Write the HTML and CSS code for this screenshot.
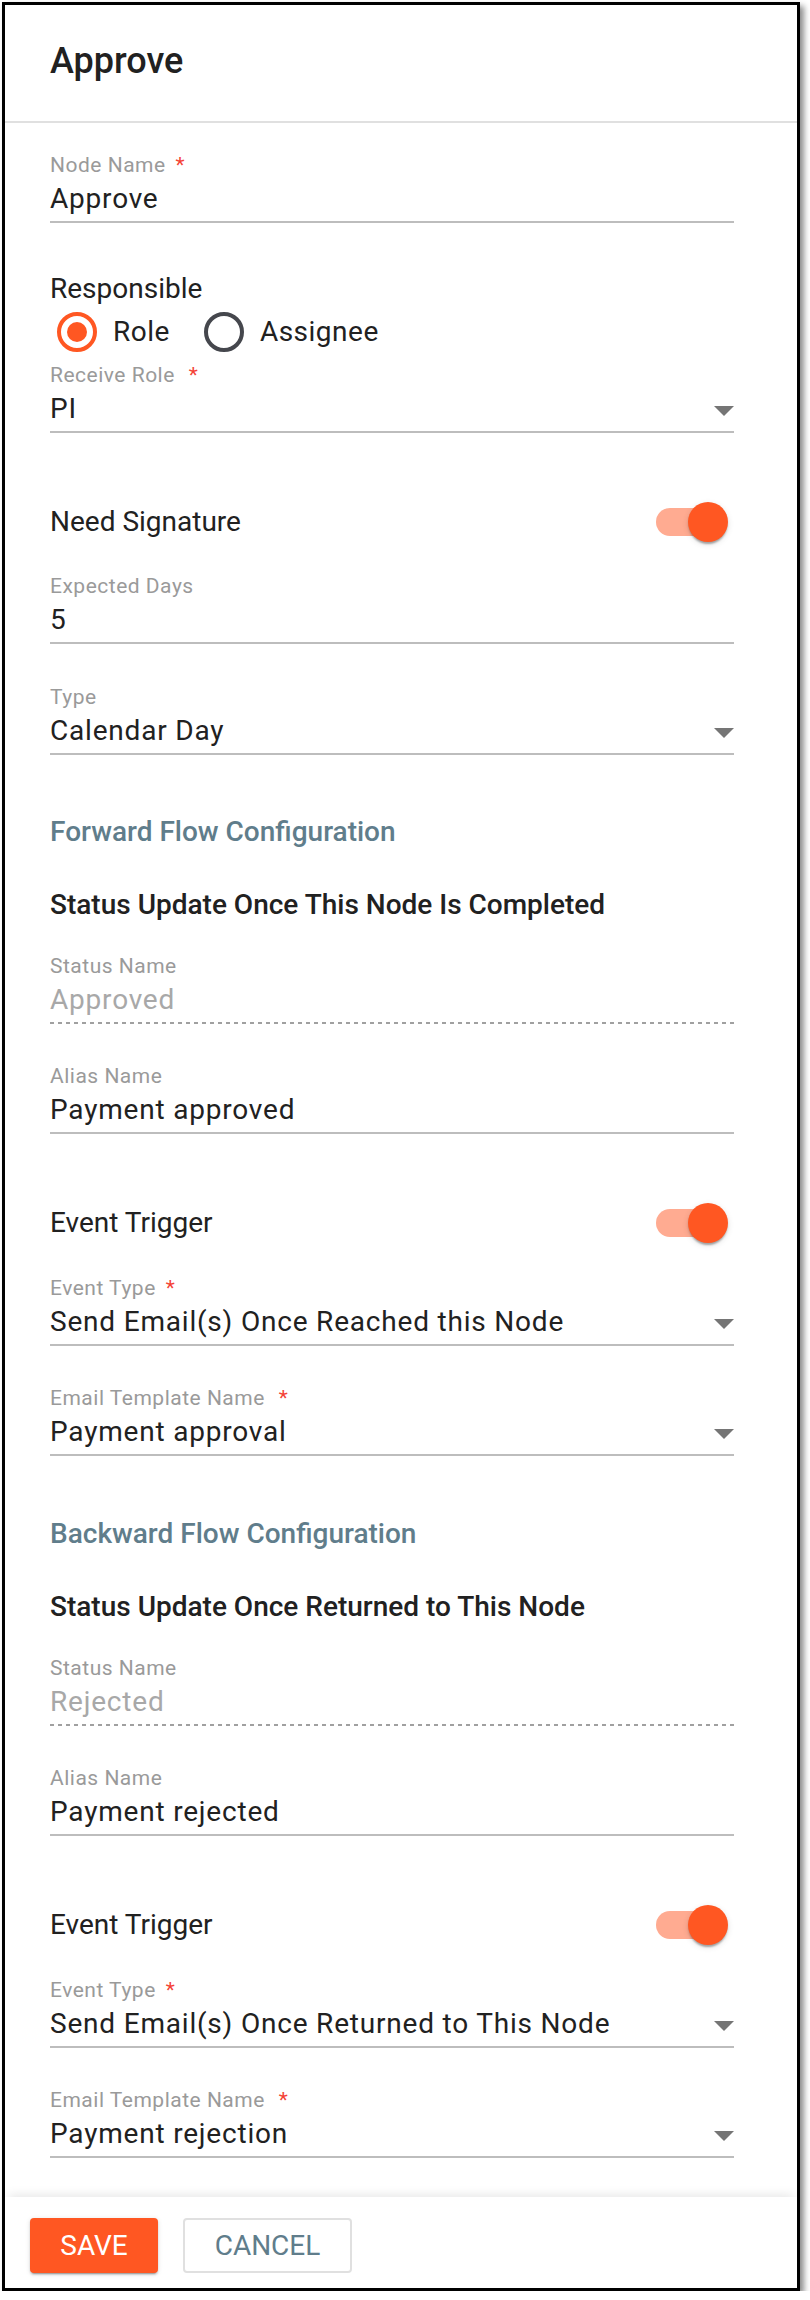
FILE: index.html
```html
<!DOCTYPE html>
<html lang="en">
<head>
<meta charset="utf-8">
<title>Approve</title>
<link rel="stylesheet" href="styles.css">
</head>
<body>
<div class="panel">
  <header class="panel-header">
    <h1 class="panel-title">Approve</h1>
  </header>
  <main class="panel-body">
    <div class="field mt-30">
      <div class="field-label">Node Name<span class="req">*</span></div>
      <div class="field-value">Approve</div>
    </div>

    <div class="group-title mt-49">Responsible</div>
    <div class="radio-row mt-6">
      <label class="radio checked"><span class="radio-circle"></span><span class="radio-text">Role</span></label>
      <label class="radio"><span class="radio-circle"></span><span class="radio-text">Assignee</span></label>
    </div>

    <div class="field mt-11">
      <div class="field-label">Receive Role<span class="req wide">*</span></div>
      <div class="field-value select"><span>PI</span><span class="arrow"></span></div>
    </div>

    <div class="switch-row mt-69">
      <span class="switch-text">Need Signature</span>
      <span class="toggle"><span class="toggle-track"></span><span class="toggle-thumb"></span></span>
    </div>

    <div class="field mt-32">
      <div class="field-label">Expected Days</div>
      <div class="field-value">5</div>
    </div>

    <div class="field mt-41">
      <div class="field-label">Type</div>
      <div class="field-value select"><span>Calendar Day</span><span class="arrow"></span></div>
    </div>

    <h2 class="section-title mt-60">Forward Flow Configuration</h2>
    <h3 class="sub-title mt-39">Status Update Once This Node Is Completed</h3>

    <div class="field mt-32">
      <div class="field-label">Status Name</div>
      <div class="field-value disabled">Approved</div>
    </div>

    <div class="field mt-40">
      <div class="field-label">Alias Name</div>
      <div class="field-value">Payment approved</div>
    </div>

    <div class="switch-row mt-69">
      <span class="switch-text">Event Trigger</span>
      <span class="toggle"><span class="toggle-track"></span><span class="toggle-thumb"></span></span>
    </div>

    <div class="field mt-33">
      <div class="field-label">Event Type<span class="req">*</span></div>
      <div class="field-value select"><span>Send Email(s) Once Reached this Node</span><span class="arrow"></span></div>
    </div>

    <div class="field mt-40">
      <div class="field-label">Email Template Name<span class="req wide">*</span></div>
      <div class="field-value select"><span>Payment approval</span><span class="arrow"></span></div>
    </div>

    <h2 class="section-title mt-61">Backward Flow Configuration</h2>
    <h3 class="sub-title mt-39">Status Update Once Returned to This Node</h3>

    <div class="field mt-32">
      <div class="field-label">Status Name</div>
      <div class="field-value disabled">Rejected</div>
    </div>

    <div class="field mt-40">
      <div class="field-label">Alias Name</div>
      <div class="field-value">Payment rejected</div>
    </div>

    <div class="switch-row mt-69">
      <span class="switch-text">Event Trigger</span>
      <span class="toggle"><span class="toggle-track"></span><span class="toggle-thumb"></span></span>
    </div>

    <div class="field mt-33">
      <div class="field-label">Event Type<span class="req">*</span></div>
      <div class="field-value select"><span>Send Email(s) Once Returned to This Node</span><span class="arrow"></span></div>
    </div>

    <div class="field mt-40">
      <div class="field-label">Email Template Name<span class="req wide">*</span></div>
      <div class="field-value select"><span>Payment rejection</span><span class="arrow"></span></div>
    </div>
  </main>
  <footer class="panel-footer">
    <button class="btn btn-save" type="button">SAVE</button>
    <button class="btn btn-cancel" type="button">CANCEL</button>
  </footer>
</div>
</body>
</html>
```

FILE: styles.css
```css
html, body {
  margin: 0;
  padding: 0;
  background: #ffffff;
}

body {
  font-family: Roboto, "Liberation Sans", Arial, sans-serif;
  color: #212121;
  padding: 2px 0 0 2px;
}

.panel {
  width: 798px;
  box-sizing: border-box;
  border: 3px solid #000000;
  background: #ffffff;
  box-shadow: 4px 4px 6px rgba(0, 0, 0, 0.45);
  display: flex;
  flex-direction: column;
}

.panel-header {
  padding: 35px 45px 39px;
  border-bottom: 2px solid #e0e0e0;
}

.panel-title {
  margin: 0;
  font-size: 36px;
  line-height: 42px;
  font-weight: 500;
  color: #212121;
}

.panel-body {
  padding: 0 63px 39px 45px;
  display: flex;
  flex-direction: column;
}

/* spacing helpers */
.mt-6 { margin-top: 6px; }
.mt-11 { margin-top: 11px; }
.mt-30 { margin-top: 30px; }
.mt-32 { margin-top: 32px; }
.mt-33 { margin-top: 33px; }
.mt-39 { margin-top: 39px; }
.mt-40 { margin-top: 40px; }
.mt-41 { margin-top: 41px; }
.mt-49 { margin-top: 49px; }
.mt-60 { margin-top: 60px; }
.mt-61 { margin-top: 61px; }
.mt-69 { margin-top: 69px; }

/* form fields */
.field {
  display: flex;
  flex-direction: column;
}

.field-label {
  font-size: 21px;
  line-height: 24px;
  letter-spacing: 0.5px;
  color: #9a9a9a;
  white-space: nowrap;
}

.req {
  color: #f44336;
  margin-left: 10px;
}

.req.wide {
  margin-left: 14px;
}

.field-value {
  margin-top: 5px;
  font-size: 28px;
  line-height: 34px;
  letter-spacing: 0.8px;
  color: #212121;
  padding-bottom: 5px;
  border-bottom: 2px solid #bdbdbd;
}

.field-value.select {
  display: flex;
  justify-content: space-between;
  align-items: center;
}

.field-value.disabled {
  color: #a8a8a8;
  border-bottom: none;
  padding-bottom: 7px;
  background-image: linear-gradient(to right, #a0a0a0 0, #a0a0a0 55%, transparent 55%);
  background-size: 8px 2px;
  background-repeat: repeat-x;
  background-position: 0 100%;
}

.arrow {
  width: 0;
  height: 0;
  border-left: 10px solid transparent;
  border-right: 10px solid transparent;
  border-top: 10px solid #757575;
  margin-top: 4px;
}

/* titles */
.group-title {
  font-size: 28px;
  line-height: 34px;
  color: #212121;
}

.section-title {
  margin-bottom: 0;
  font-size: 28px;
  line-height: 34px;
  font-weight: 500;
  color: #607d8b;
}

.sub-title {
  margin-bottom: 0;
  font-size: 28px;
  line-height: 34px;
  font-weight: 500;
  color: #212121;
}

/* radios */
.radio-row {
  display: flex;
  align-items: center;
  height: 40px;
  padding-left: 7px;
  gap: 34px;
}

.radio {
  display: flex;
  align-items: center;
  gap: 16px;
  font-size: 28px;
  line-height: 34px;
  letter-spacing: 0.5px;
  color: #212121;
}

.radio-circle {
  width: 40px;
  height: 40px;
  box-sizing: border-box;
  border: 4px solid #45474d;
  border-radius: 50%;
  display: flex;
  align-items: center;
  justify-content: center;
}

.radio.checked .radio-circle {
  border-color: #ff5722;
}

.radio.checked .radio-circle::after {
  content: "";
  width: 20px;
  height: 20px;
  border-radius: 50%;
  background: #ff5722;
}

/* switch rows */
.switch-row {
  display: flex;
  justify-content: space-between;
  align-items: center;
  height: 40px;
  padding-right: 6px;
}

.switch-text {
  font-size: 28px;
  line-height: 34px;
  color: #212121;
}

.toggle {
  position: relative;
  width: 72px;
  height: 40px;
}

.toggle-track {
  position: absolute;
  left: 0;
  top: 6px;
  width: 68px;
  height: 28px;
  border-radius: 14px;
  background: #ffab91;
}

.toggle-thumb {
  position: absolute;
  right: 0;
  top: 0;
  width: 40px;
  height: 40px;
  border-radius: 50%;
  background: #ff5722;
  box-shadow: 0 4px 2px -2px rgba(0, 0, 0, 0.2), 0 2px 2px 0 rgba(0, 0, 0, 0.14), 0 2px 6px 0 rgba(0, 0, 0, 0.12);
}

/* footer */
.panel-footer {
  display: flex;
  gap: 25px;
  padding: 21px 25px 15px;
  background: #ffffff;
  box-shadow: 0 -6px 10px -4px rgba(0, 0, 0, 0.1);
}

.btn {
  height: 55px;
  box-sizing: border-box;
  border-radius: 4px;
  font-family: Roboto, "Liberation Sans", Arial, sans-serif;
  font-size: 28px;
  line-height: 34px;
  font-weight: 400;
  cursor: pointer;
}

.btn-save {
  width: 128px;
  border: none;
  background: #ff5722;
  color: #ffffff;
  box-shadow: 0 3px 1px -2px rgba(0, 0, 0, 0.2), 0 2px 2px 0 rgba(0, 0, 0, 0.14), 0 1px 5px 0 rgba(0, 0, 0, 0.12);
}

.btn-cancel {
  width: 169px;
  border: 2px solid #e0e0e0;
  background: #ffffff;
  color: #607d8b;
}
```
